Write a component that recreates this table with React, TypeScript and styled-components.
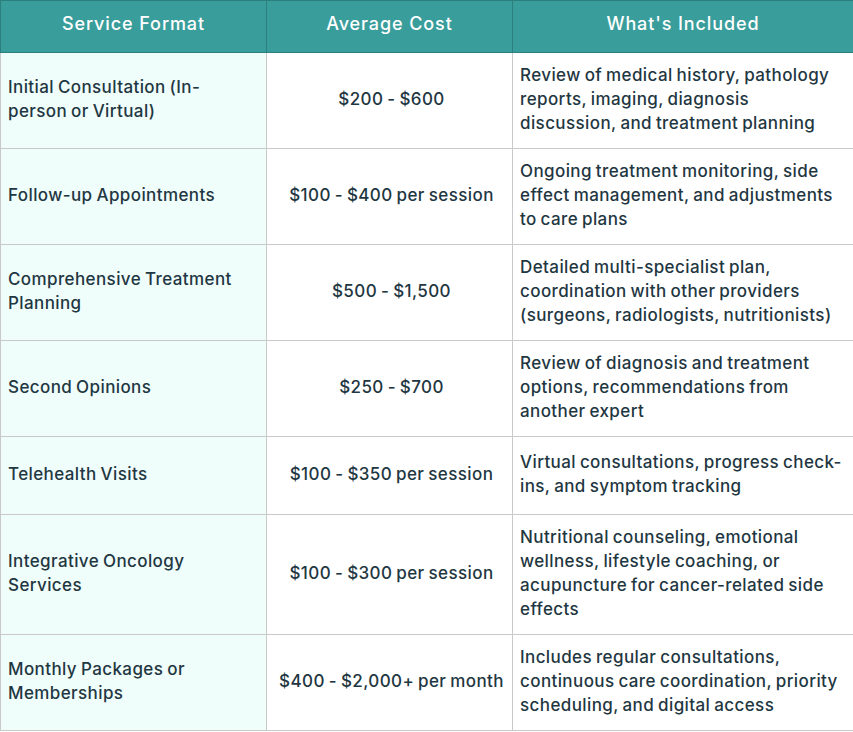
import React from "react";
import styled, { createGlobalStyle } from "styled-components";

const GlobalStyle = createGlobalStyle`
    html, body {
        margin: 0;
        padding: 0;
        background: #ffffff;
    }
`;

const Table = styled.table`
    width: 853px;
    border-collapse: collapse;
    table-layout: fixed;
    font-family: Inter, "Noto Sans", sans-serif;
    font-size: 17px;
    font-weight: 500;
    letter-spacing: 0.4px;
    word-spacing: -1px;
    line-height: 24px;
    color: #1f3742;
`;

const HeadCell = styled.th`
    height: 52px;
    padding: 0 8px 5px;
    background: #399d9b;
    color: #ffffff;
    font-size: 18px;
    font-weight: 500;
    letter-spacing: 0.9px;
    word-spacing: 0;
    text-align: center;
    border: 1px solid #2b807e;
    box-sizing: border-box;
`;

const Row = styled.tr<{ $height: number }>`
    height: ${(p) => p.$height}px;
`;

type Variant = "name" | "cost" | "desc";

const rightPad: Record<Variant, number> = { name: 20, cost: 3, desc: 11 };

const Cell = styled.td<{ $variant: Variant }>`
    padding: 10px ${(p) => rightPad[p.$variant]}px 13px 7px;
    border: 1px solid #c9c9c9;
    vertical-align: middle;
    text-align: ${(p) => (p.$variant === "cost" ? "center" : "left")};
    background: ${(p) => (p.$variant === "name" ? "#effdfb" : "#ffffff")};
`;

const rows = [
    {
        name: "Initial Consultation (In-person or Virtual)",
        cost: "$200 - $600",
        desc: "Review of medical history, pathology reports, imaging, diagnosis discussion, and treatment planning",
        height: 95,
    },
    {
        name: "Follow-up Appointments",
        cost: "$100 - $400 per session",
        desc: "Ongoing treatment monitoring, side effect management, and adjustments to care plans",
        height: 95,
    },
    {
        name: "Comprehensive Treatment Planning",
        cost: "$500 - $1,500",
        desc: "Detailed multi-specialist plan, coordination with other providers (surgeons, radiologists, nutritionists)",
        height: 95,
    },
    {
        name: "Second Opinions",
        cost: "$250 - $700",
        desc: "Review of diagnosis and treatment options, recommendations from another expert",
        height: 95,
    },
    {
        name: "Telehealth Visits",
        cost: "$100 - $350 per session",
        desc: "Virtual consultations, progress check-ins, and symptom tracking",
        height: 78,
    },
    {
        name: "Integrative Oncology Services",
        cost: "$100 - $300 per session",
        desc: "Nutritional counseling, emotional wellness, lifestyle coaching, or acupuncture for cancer-related side effects",
        height: 119,
    },
    {
        name: "Monthly Packages or Memberships",
        cost: "$400 - $2,000+ per month",
        desc: "Includes regular consultations, continuous care coordination, priority scheduling, and digital access",
        height: 96,
    },
];

const App: React.FC = () => {
    return (
        <>
            <GlobalStyle />
            <Table>
                <colgroup>
                    <col style={{ width: 266 }} />
                    <col style={{ width: 246 }} />
                    <col style={{ width: 341 }} />
                </colgroup>
                <thead>
                    <tr>
                        <HeadCell>Service Format</HeadCell>
                        <HeadCell>Average Cost</HeadCell>
                        <HeadCell>What's Included</HeadCell>
                    </tr>
                </thead>
                <tbody>
                    {rows.map((r) => (
                        <Row key={r.name} $height={r.height}>
                            <Cell $variant="name">{r.name}</Cell>
                            <Cell $variant="cost">{r.cost}</Cell>
                            <Cell $variant="desc">{r.desc}</Cell>
                        </Row>
                    ))}
                </tbody>
            </Table>
        </>
    );
};

export default App;
